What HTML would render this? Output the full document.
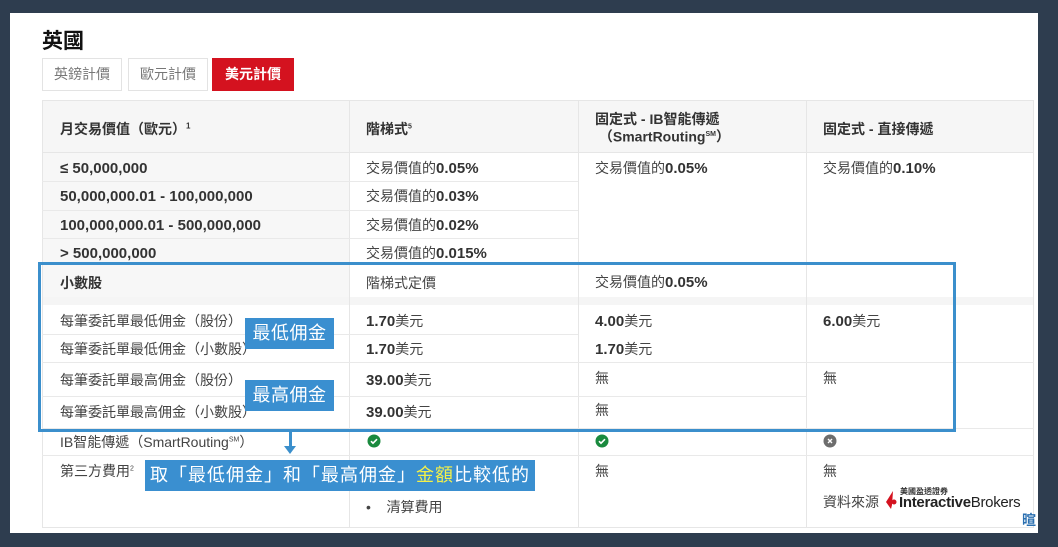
<html><head><style>
body{margin:0;width:1058px;height:547px;background:#2e3d4f;position:relative;overflow:hidden;font-family:"Liberation Sans","Noto Sans CJK TC",sans-serif;color:#333}
.a{position:absolute}
.p{left:10px;top:13px;width:1028px;height:520px;background:#fff}
.t{font-size:14px;color:#444}
.b{font-weight:bold;color:#333}
.n{font-size:15px;font-weight:bold;color:#333}
.hl{background:#e9e9e9;height:1px}
.vl{background:#e6e6e6;width:1px}
.lab{background:#3a8fd0;color:#fff;font-size:18px;text-align:center;letter-spacing:0.5px}
</style></head><body>
<div class="a p"></div>
<div class="a" style="left:42px;top:25px;font-size:21px;font-weight:bold;color:#111">英國</div>
<div class="a t" style="left:42px;top:58px;width:80px;height:33px;border:1px solid #e3e3e3;box-sizing:border-box;line-height:31px;text-align:center;color:#777">英鎊計價</div>
<div class="a t" style="left:128px;top:58px;width:80px;height:33px;border:1px solid #e3e3e3;box-sizing:border-box;line-height:31px;text-align:center;color:#777">歐元計價</div>
<div class="a t" style="left:212px;top:58px;width:82px;height:33px;background:#d4121f;line-height:33px;text-align:center;color:#fff;font-weight:bold">美元計價</div>
<div class="a" style="left:42px;top:100px;width:992px;height:53px;background:#f6f6f6;border:1px solid #e6e6e6;box-sizing:border-box"></div>
<div class="a" style="left:42px;top:153px;width:307px;height:113px;background:#f7f7f7"></div>
<div class="a" style="left:42px;top:266px;width:992px;height:39px;background:#f5f5f5"></div>
<div class="a" style="left:349px;top:266px;width:685px;height:31px;background:#fff"></div>
<div class="a" style="left:42px;top:266px;width:307px;height:31px;background:#f7f7f7"></div>
<div class="a" style="left:42px;top:100px;width:992px;height:428px;border:1px solid #e6e6e6;box-sizing:border-box"></div>
<div class="a vl" style="left:349px;top:100px;height:428px"></div>
<div class="a vl" style="left:578px;top:100px;height:428px"></div>
<div class="a vl" style="left:806px;top:100px;height:428px"></div>
<div class="a hl" style="left:42px;top:181px;width:536px"></div>
<div class="a hl" style="left:42px;top:210px;width:536px"></div>
<div class="a hl" style="left:42px;top:238px;width:536px"></div>
<div class="a hl" style="left:42px;top:334px;width:536px"></div>
<div class="a hl" style="left:42px;top:362px;width:992px"></div>
<div class="a hl" style="left:42px;top:396px;width:764px"></div>
<div class="a hl" style="left:42px;top:428px;width:992px"></div>
<div class="a hl" style="left:42px;top:455px;width:992px"></div>
<div class="a b" style="left:60px;top:119px;font-size:14px">月交易價值（歐元）<sup style="font-size:8px">1</sup></div>
<div class="a b" style="left:366px;top:119px;font-size:14px">階梯式<sup style="font-size:7px">5</sup></div>
<div class="a b" style="left:595px;top:112px;font-size:14px;line-height:15px">固定式 - IB智能傳遞<br>&nbsp;（SmartRouting<sup style="font-size:7px">SM</sup>）</div>
<div class="a b" style="left:823px;top:119px;font-size:14px">固定式 - 直接傳遞</div>
<div class="a n" style="left:60px;top:160px">≤ 50,000,000</div>
<div class="a n" style="left:60px;top:188px">50,000,000.01 - 100,000,000</div>
<div class="a n" style="left:60px;top:217px">100,000,000.01 - 500,000,000</div>
<div class="a n" style="left:60px;top:245px">&gt; 500,000,000</div>
<div class="a t" style="left:366px;top:158px">交易價值的<span class="n">0.05%</span></div>
<div class="a t" style="left:366px;top:186px">交易價值的<span class="n">0.03%</span></div>
<div class="a t" style="left:366px;top:215px">交易價值的<span class="n">0.02%</span></div>
<div class="a t" style="left:366px;top:243px">交易價值的<span class="n">0.015%</span></div>
<div class="a t" style="left:595px;top:158px">交易價值的<span class="n">0.05%</span></div>
<div class="a t" style="left:823px;top:158px">交易價值的<span class="n">0.10%</span></div>
<div class="a b" style="left:60px;top:273px;font-size:14px">小數股</div>
<div class="a t" style="left:366px;top:273px">階梯式定價</div>
<div class="a t" style="left:595px;top:272px">交易價值的<span class="n">0.05%</span></div>
<div class="a t" style="left:60px;top:311px">每筆委託單最低佣金（股份）</div>
<div class="a t" style="left:60px;top:339px">每筆委託單最低佣金（小數股）</div>
<div class="a t" style="left:60px;top:370px">每筆委託單最高佣金（股份）</div>
<div class="a t" style="left:60px;top:402px">每筆委託單最高佣金（小數股）</div>
<div class="a t" style="left:366px;top:311px"><span class="n">1.70</span>美元</div>
<div class="a t" style="left:366px;top:339px"><span class="n">1.70</span>美元</div>
<div class="a t" style="left:366px;top:370px"><span class="n">39.00</span>美元</div>
<div class="a t" style="left:366px;top:402px"><span class="n">39.00</span>美元</div>
<div class="a t" style="left:595px;top:311px"><span class="n">4.00</span>美元</div>
<div class="a t" style="left:595px;top:339px"><span class="n">1.70</span>美元</div>
<div class="a t" style="left:595px;top:368px">無</div>
<div class="a t" style="left:595px;top:400px">無</div>
<div class="a t" style="left:823px;top:311px"><span class="n">6.00</span>美元</div>
<div class="a t" style="left:823px;top:368px">無</div>
<div class="a t" style="left:60px;top:432px">IB智能傳遞（SmartRouting<sup style="font-size:7px">SM</sup>）</div>
<svg class="a" style="left:367px;top:434px" width="14" height="14"><circle cx="7" cy="7" r="6.5" fill="#1a8a3e"/><path d="M4 7.2l2 2 4-4" stroke="#fff" stroke-width="1.6" fill="none"/></svg>
<svg class="a" style="left:595px;top:434px" width="14" height="14"><circle cx="7" cy="7" r="6.5" fill="#1a8a3e"/><path d="M4 7.2l2 2 4-4" stroke="#fff" stroke-width="1.6" fill="none"/></svg>
<svg class="a" style="left:823px;top:434px" width="14" height="14"><circle cx="7" cy="7" r="6.5" fill="#6d6d6d"/><path d="M5 5l4 4M9 5l-4 4" stroke="#fff" stroke-width="1.4"/></svg>
<div class="a t" style="left:60px;top:461px">第三方費用<sup style="font-size:7px">2</sup></div>
<div class="a t" style="left:595px;top:461px">無</div>
<div class="a t" style="left:823px;top:461px">無</div>
<div class="a t" style="left:366px;top:497px">•&nbsp;&nbsp;&nbsp;&nbsp;清算費用</div>
<div class="a t" style="left:823px;top:492px">資料來源</div>
<svg class="a" style="left:884px;top:490px" width="14" height="20"><path d="M9 1L2 12l5 7 1-4z" fill="#d4121f"/><circle cx="10" cy="12" r="2.5" fill="#d4121f"/></svg>
<div class="a" style="left:900px;top:486px;font-size:8px;color:#333;font-weight:bold">美國盈透證券</div>
<div class="a" style="left:899px;top:494px;font-size:15px;color:#222;letter-spacing:-0.3px"><b>Interactive</b>Brokers</div>
<div class="a" style="left:1022px;top:510px;font-size:14px;color:#2a6fb0;font-weight:bold">暄</div>
<div class="a" style="left:38px;top:262px;width:918px;height:170px;border:3px solid #3b8fcc;box-sizing:border-box"></div>
<div class="a lab" style="left:245px;top:318px;width:89px;height:31px;line-height:31px">最低佣金</div>
<div class="a lab" style="left:245px;top:380px;width:89px;height:31px;line-height:31px">最高佣金</div>
<div class="a" style="left:289px;top:431px;width:3px;height:18px;background:#3b8fcc"></div>
<div class="a" style="left:284px;top:446px;width:0;height:0;border-left:6px solid transparent;border-right:6px solid transparent;border-top:8px solid #3b8fcc"></div>
<div class="a lab" style="left:145px;top:460px;width:390px;height:31px;line-height:31px;letter-spacing:1px">取「最低佣金」和「最高佣金」<span style="color:#f2ef4a">金額</span>比較低的</div>
</body></html>
